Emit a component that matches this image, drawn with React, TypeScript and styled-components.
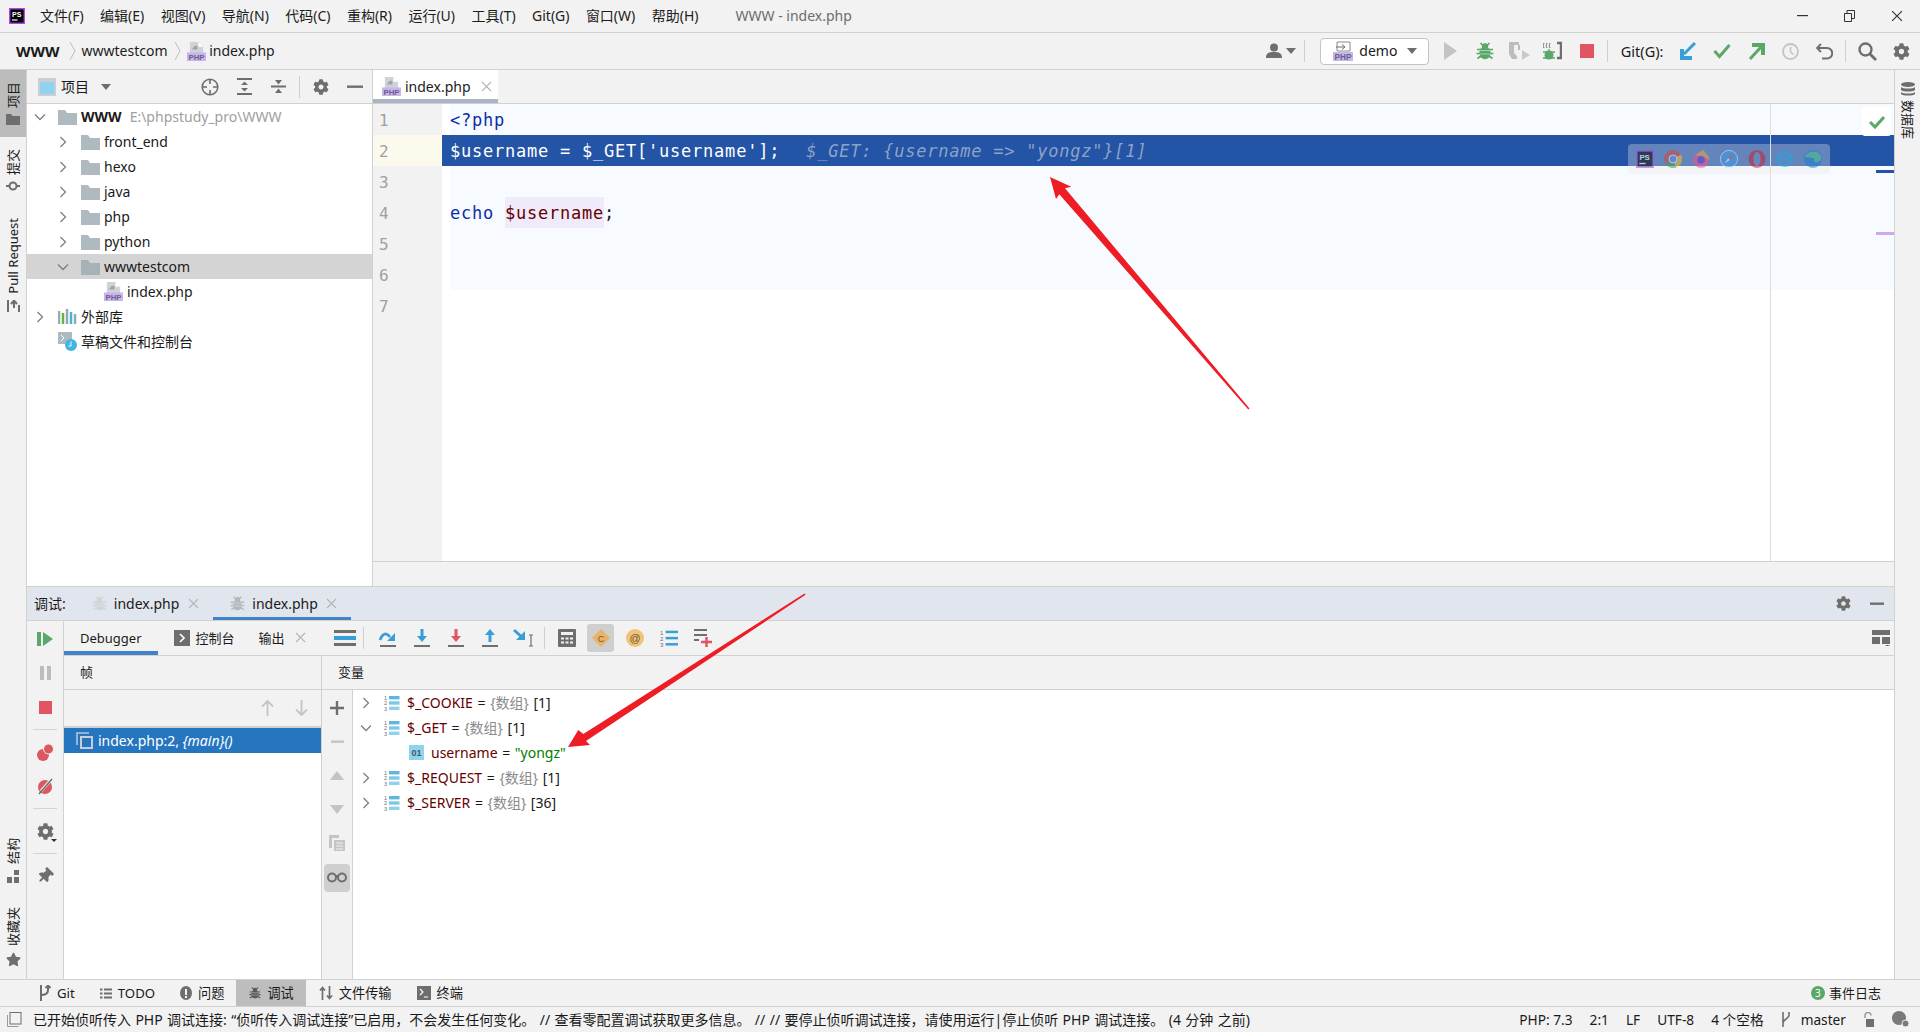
import React from 'react';
import styled, { createGlobalStyle } from 'styled-components';
import { FaCog, FaStar, FaThumbtack } from 'react-icons/fa';

const Global = createGlobalStyle`
  html, body { margin: 0; padding: 0; background: #f2f2f2; overflow: hidden; }
  #root { width: 1920px; height: 1032px; }
  * { box-sizing: border-box; }
`;

const LINE = '#d1d1d1';
const UI = `"Noto Sans", "Noto Sans CJK SC", sans-serif`;
const MONO = `"DejaVu Sans Mono", "Liberation Mono", "Noto Sans CJK SC", monospace`;

const Page = styled.div`
  position: relative; width: 1920px; height: 1032px; display: flex; flex-direction: column;
  overflow: hidden; background: #f2f2f2; color: #1a1a1a; font: 14px/20px ${UI}; white-space: nowrap;
`;
const IconSvg = styled.svg`display: block; flex: none;`;
const Slot = styled.div<{ $w?: number; $h?: number }>`
  flex: none; width: ${p => p.$w ?? 34}px; height: ${p => p.$h ? `${p.$h}px` : '100%'};
  display: flex; align-items: center; justify-content: center; color: #6e6e6e;
`;
const Sep = styled.div<{ $h?: number; $mx?: number }>`
  flex: none; width: 1px; height: ${p => p.$h ?? 22}px; background: #cfcfcf; margin: 0 ${p => p.$mx ?? 4}px;
`;
const Push = styled.div`margin-left: auto; display: flex; align-items: center; height: 100%;`;

/* title */
const TitleBar = styled.header`flex: none; height: 33px; display: flex; align-items: center; border-bottom: 1px solid ${LINE}; padding-left: 9px;`;
const Menu = styled.nav`display: flex; gap: 16.4px; margin-left: 15px;`;
const MenuItem = styled.span`color: #1c1c1c;`;
const WinTitle = styled.span`margin-left: 37px; color: #6d6d6d;`;

/* nav */
const NavBar = styled.div`flex: none; height: 37px; display: flex; align-items: center; border-bottom: 1px solid ${LINE}; padding: 0 2px 0 16px;`;
const CrumbRoot = styled.b`font-weight: 700; font-size: 15px; margin-right: 3px;`;
const Crumb = styled.span`color: #1c1c1c;`;
const CrumbArrow = styled.span`display: flex; margin: 0 6px;`;
const RunCombo = styled.div`
  flex: none; width: 109px; height: 27px; margin: 0 4.5px 0 7px; background: #fff; border: 1px solid #c4c4c4; border-radius: 4px;
  display: flex; align-items: center; padding-left: 12px; gap: 6px;
`;
const Caret = styled.span<{ $ml?: number }>`
  width: 0; height: 0; border-left: 5px solid transparent; border-right: 5px solid transparent;
  border-top: 6px solid #6e6e6e; margin-left: ${p => p.$ml ?? 0}px; flex: none;
`;
const GitLabel = styled.span`margin: 0 7.5px 0 10px; font-size: 14.5px;`;

/* main */
const Main = styled.div`flex: 1; min-height: 0; display: flex;`;
const LeftStrip = styled.aside`flex: none; width: 27px; border-right: 1px solid ${LINE}; display: flex; flex-direction: column; align-items: stretch;`;
const RightStrip = styled.aside`flex: none; width: 26px; border-left: 1px solid ${LINE}; display: flex; flex-direction: column; align-items: center; padding-top: 12px; gap: 4px;`;
const StripItem = styled.div<{ $active?: boolean; $mt?: string }>`
  display: flex; flex-direction: column; align-items: center; gap: 6px; padding: 12px 0;
  background: ${p => p.$active ? '#bcbcbc' : 'transparent'}; margin-top: ${p => p.$mt ?? '0'};
`;
const UpText = styled.span`writing-mode: vertical-rl; text-orientation: sideways; transform: rotate(180deg); font-size: 13px; line-height: 18px;`;
const DownText = styled.span`writing-mode: vertical-rl; text-orientation: sideways; font-size: 13px; line-height: 18px;`;

const Center = styled.div`flex: 1; min-width: 0; display: flex; flex-direction: column;`;
const Upper = styled.div`flex: none; height: 516px; display: flex;`;

/* project */
const Project = styled.section`flex: none; width: 346px; background: #fff; border-right: 1px solid ${LINE}; display: flex; flex-direction: column;`;
const PanelBar = styled.div`flex: none; height: 34px; background: #f2f2f2; border-bottom: 1px solid ${LINE}; display: flex; align-items: center; padding-left: 11px;`;
const PanelTitle = styled.span`margin: 0 12px 0 5px;`;
const Row = styled.div<{ $level: number; $sel?: boolean }>`
  height: 25px; display: flex; align-items: center; padding-left: ${p => 4 + p.$level * 23}px;
  background: ${p => p.$sel ? '#d4d4d4' : 'transparent'};
`;
const Twist = styled.span`width: 17px; flex: none; display: flex; justify-content: center; margin-right: 10px;`;
const RowLabel = styled.span<{ $bold?: boolean }>`margin-left: 4px; font-weight: ${p => p.$bold ? 700 : 400};`;
const Dim = styled.span`margin-left: 8px; color: #a0a0a0;`;

/* editor */
const Editor = styled.section`flex: 1; min-width: 0; display: flex; flex-direction: column;`;
const EditorTabs = styled.div`flex: none; height: 34px; border-bottom: 1px solid ${LINE}; display: flex;`;
const EditorTab = styled.div`
  width: 125px; background: #fff; border-bottom: 4px solid #a9b5c4; display: flex; align-items: center; padding: 4px 0 0 9px; gap: 4px;
`;
const CloseX = styled.span<{ $ml?: number }>`display: flex; margin-left: ${p => p.$ml ?? 6}px;`;
const EditorBody = styled.div`flex: 1; min-height: 0; display: flex; background: #fff;`;
const Gutter = styled.div`flex: none; width: 69px; background: #f2f2f2;`;
const GutterNum = styled.div<{ $active?: boolean }>`
  height: 31px; padding-left: 6px; font: 16px/33px ${MONO}; color: #a0a0a0;
  background: ${p => p.$active ? '#fcfaed' : 'transparent'};
`;
const Code = styled.div`flex: 1; min-width: 0; position: relative; overflow: hidden;`;
const CodeLine = styled.div<{ $active?: boolean; $plain?: boolean }>`
  height: 31px; padding-left: 8px; font: 17px/33px ${MONO}; letter-spacing: 0.77px; white-space: pre;
  color: ${p => p.$active ? '#fff' : '#1a1a1a'};
  background: ${p => p.$active ? '#2354a5' : p.$plain ? '#fff' : 'linear-gradient(to right, #fff 8px, #f7faff 8px)'};
`;
const Kw = styled.span`color: #0a2fa8;`;
const UsedVar = styled.span`display: inline-block; height: 31px; background: #efebfa; color: #660000;`;
const Hint = styled.span`margin-left: 26px; font-style: italic; color: #8da2c8;`;
const RightMargin = styled.div`position: absolute; left: 1328px; top: 0; bottom: 0; width: 1px; background: #dcdcdc;`;
const InspectBadge = styled.div`position: absolute; right: 3px; top: 3px; width: 29px; height: 29px; background: #fff; border-radius: 3px; display: flex; align-items: center; justify-content: center;`;
const StripeMark = styled.div<{ $top: number; $color: string }>`position: absolute; right: 0; top: ${p => p.$top}px; width: 18px; height: 3px; background: ${p => p.$color};`;
const BrowserBar = styled.div`
  position: absolute; left: 1186px; top: 40px; width: 202px; height: 30px; border-radius: 4px; background: rgba(233,233,233,.33);
  display: flex; align-items: center; padding-left: 8px; gap: 10px;
`;
const BrowserIcon = styled.span`opacity: .55; display: flex;`;
const HScroll = styled.div`flex: none; height: 25px; border-top: 1px solid ${LINE};`;

/* debug */
const Debug = styled.section`flex: 1; min-height: 0; border-top: 1px solid ${LINE}; display: flex; flex-direction: column; background: #f2f2f2;`;
const DebugHead = styled.div`flex: none; height: 34px; background: #e1e5ed; border-bottom: 1px solid ${LINE}; display: flex; align-items: center; padding-left: 7px;`;
const DebugTab = styled.div<{ $active?: boolean }>`
  height: 33px; display: flex; align-items: center; gap: 7px; padding: 3px 14px 0 17px;
  border-bottom: 3px solid ${p => p.$active ? '#4083c9' : 'transparent'};
  margin-left: ${p => p.$active ? 0 : 9}px;
`;
const DebugBody = styled.div`flex: 1; min-height: 0; display: flex;`;
const DebugSide = styled.div`flex: none; width: 37px; border-right: 1px solid ${LINE}; display: flex; flex-direction: column; align-items: center; padding-top: 1px;`;
const SideSep = styled.div`width: 24px; height: 1px; background: #d4d4d4; margin: 5px 0;`;
const GearDrop = styled.span`
  position: relative; display: flex;
  &::after { content: ''; position: absolute; right: -3px; bottom: -2px; border-left: 3px solid transparent; border-right: 3px solid transparent; border-top: 3px solid #333; }
`;
const Pin = styled.span`display: flex; transform: rotate(45deg);`;
const DebugMain = styled.div`flex: 1; min-width: 0; display: flex; flex-direction: column;`;
const DebugTabs = styled.div`flex: none; height: 35px; border-bottom: 1px solid ${LINE}; display: flex; align-items: center; font-size: 13px;`;
const SubTab = styled.div<{ $active?: boolean; $pad?: string }>`
  height: 34px; display: flex; align-items: center; gap: 6px; padding: ${p => p.$pad ?? '0 16px'};
  border-bottom: 4px solid ${p => p.$active ? '#4083c9' : 'transparent'};
  padding-top: 3px;
`;
const ToggledBox = styled.span`width: 27px; height: 28px; background: #cfcfcf; border-radius: 3px; display: flex; align-items: center; justify-content: center;`;
const Panes = styled.div`flex: 1; min-height: 0; display: flex;`;
const Frames = styled.div`flex: none; width: 258px; border-right: 1px solid ${LINE}; display: flex; flex-direction: column; background: #fff;`;
const PaneHead = styled.div`flex: none; height: 34px; background: #f2f2f2; border-bottom: 1px solid ${LINE}; display: flex; align-items: center; padding: 0 0 2px 16px; font-size: 13px;`;
const FrameTools = styled.div`flex: none; height: 38px; background: #f2f2f2; border-bottom: 2px solid ${LINE}; display: flex; align-items: center; justify-content: flex-end; padding-right: 3px;`;
const FrameRow = styled.div`height: 25px; background: #2675bf; color: #fff; display: flex; align-items: center; padding-left: 12px; gap: 5px;`;
const Vars = styled.div`flex: 1; min-width: 0; display: flex; flex-direction: column;`;
const VarBody = styled.div`flex: 1; min-height: 0; display: flex; background: #fff;`;
const VarTools = styled.div`flex: none; width: 31px; background: #f2f2f2; border-right: 1px solid ${LINE}; display: flex; flex-direction: column; align-items: center; padding-top: 1px; gap: 0;`;
const VarList = styled.div`flex: 1;`;
const VarRow = styled.div<{ $child?: boolean }>`
  height: 25px; display: flex; align-items: center; padding-left: ${p => p.$child ? 56 : 3}px; font-size: 14px; word-spacing: 1px;
`;
const VarTwist = styled.span`width: 20px; display: flex; justify-content: center; flex: none; margin-right: 8px;`;
const VarName = styled.span`margin-left: 7px; color: #660000;`;
const VarType = styled.span`color: #8a8a8a;`;
const VarStr = styled.span`color: #008000;`;
const GlassBox = styled.span`width: 26px; height: 28px; border-radius: 4px; background: #cfcfcf; display: flex; align-items: center; justify-content: center;`;

/* bottom */
const ToolBar = styled.footer`flex: none; height: 27px; border-top: 1px solid ${LINE}; display: flex; align-items: stretch; padding-left: 26px;`;
const ToolItem = styled.div<{ $active?: boolean }>`
  display: flex; align-items: center; gap: 6px; padding: 0 12px 0 13px; font-size: 13.2px;
  background: ${p => p.$active ? '#bdbdbd' : 'transparent'};
`;
const EventBadge = styled.span`width: 14px; height: 14px; border-radius: 50%; background: #59a869; color: #fff; font-size: 10px; line-height: 14px; text-align: center;`;
const EventLog = styled.div`margin-left: auto; display: flex; align-items: center; gap: 4px; padding-right: 39px; font-size: 13px;`;
const StatusBar = styled.footer`flex: none; height: 26px; border-top: 1px solid ${LINE}; display: flex; align-items: center; padding-left: 7px; font-size: 14px;`;
const StatusMsg = styled.span`margin-left: 11px; word-spacing: 0.75px;`;
const StatusRight = styled.div`margin-left: auto; display: flex; align-items: center; gap: 17px; padding-right: 10px; font-size: 13.7px;`;
const BranchCell = styled.span`display: flex; align-items: center; gap: 10px;`;

const ArrowOverlay = styled.svg`position: absolute; left: 0; top: 0; pointer-events: none;`;

/* ---------- icons ---------- */
const I = ({ w = 16, h = 16, vb = '0 0 16 16', children }: { w?: number; h?: number; vb?: string; children: React.ReactNode }) =>
  <IconSvg width={w} height={h} viewBox={vb}>{children}</IconSvg>;

const Chev = ({ down, c = '#7f7f7f', size = 12 }: { down?: boolean; c?: string; size?: number }) => (
  <I w={size} h={size} vb="0 0 12 12">
    <path d={down ? 'M1 3.5 L6 8.5 L11 3.5' : 'M3.5 1 L8.5 6 L3.5 11'} fill="none" stroke={c} strokeWidth="1.3" />
  </I>
);
const Folder = ({ c = '#aeb9c0', w = 19 }: { c?: string; w?: number }) => (
  <I w={w} h={16} vb="0 0 19 16"><path d="M0 1h7l2 3h10v12H0z" fill={c} /></I>
);
const PhpFile = ({ w = 20, h = 20 }: { w?: number; h?: number }) => (
  <I w={w} h={h} vb="0 0 20 20">
    <path d="M3 0h9l5 5v7H3z" fill="#cfd3d6" />
    <path d="M12 0v5h5z" fill="#fff" />
    <path d="M8 4h3v4H5z" fill="#9fa6ab" />
    <rect x="0" y="11" width="20" height="9" fill="#c8b5ef" />
    <text x="10" y="18.6" textAnchor="middle" fontSize="8.2" fontWeight="700" fontFamily="Liberation Sans, sans-serif" fill="#6a5f86">PHP</text>
  </I>
);
const Close = ({ c = '#b5b5b5', s = 11 }: { c?: string; s?: number }) => (
  <I w={s} h={s} vb="0 0 11 11"><path d="M1 1l9 9M10 1l-9 9" stroke={c} strokeWidth="1.1" /></I>
);
const Bug = ({ c = '#59a869', s = 18 }: { c?: string; s?: number }) => (
  <I w={s} h={s} vb="0 0 18 18">
    <ellipse cx="9" cy="11" rx="5.6" ry="6.2" fill={c} />
    <circle cx="9" cy="4.5" r="3.2" fill={c} />
    <path d="M4.5 1l2.500 2.500M13.500 1L11 3.500M1 7.500h4M17 7.500h-4M0.500 11.500h4M17.500 11.500h-4M1.500 16.500l3.500-2.500M16.500 16.500l-3.500-2.500" stroke={c} strokeWidth="1.7" />
    <path d="M3.500 8.500h11M3.500 12h11" stroke="#f2f2f2" strokeWidth=".9" opacity=".6" />
  </I>
);
const PsLogo = ({ s = 16 }: { s?: number }) => (
  <I w={s} h={s} vb="0 0 16 16">
    <rect x="0" y="0" width="16" height="16" fill="#b345f1" />
    <rect x="1.4" y="1.4" width="13.2" height="13.2" fill="#000" />
    <text x="3" y="8.6" fontSize="7" fontWeight="700" fontFamily="Liberation Sans, sans-serif" fill="#fff">PS</text>
    <rect x="3" y="11.4" width="5.5" height="1.2" fill="#fff" />
  </I>
);
const Gear = ({ s = 16, c = '#6e6e6e' }: { s?: number; c?: string }) => <FaCog size={s} color={c} />;
const MinusIco = ({ c = '#6e6e6e', w = 16 }: { c?: string; w?: number }) => (
  <I w={w} h={4} vb={`0 0 ${w} 4`}><rect y="0.5" width={w} height="2.4" fill={c} /></I>
);
const StepBase = ({ children }: { children: React.ReactNode }) => (
  <I w={20} h={20} vb="0 0 20 20">{children}<rect x="2" y="17" width="16" height="2" fill="#6e6e6e" /></I>
);
const BLUE = '#389fd6';
const ListNum = ({ w = 16 }: { w?: number }) => (
  <I w={w} h={16} vb="0 0 16 16">
    <text x="0" y="5" fontSize="5.5" fontFamily="Liberation Sans, sans-serif" fill="#6e6e6e">1</text>
    <text x="0" y="10.4" fontSize="5.5" fontFamily="Liberation Sans, sans-serif" fill="#6e6e6e">2</text>
    <text x="0" y="15.8" fontSize="5.5" fontFamily="Liberation Sans, sans-serif" fill="#6e6e6e">3</text>
    <rect x="5" y="1" width="10.5" height="3.4" fill="#5eb6dd" />
    <rect x="5" y="6.3" width="10.5" height="3.4" fill="#7cc8e6" />
    <rect x="5" y="11.6" width="10.5" height="3.4" fill="#8fd2ea" />
  </I>
);

const Arrows = () => (
  <ArrowOverlay width={1920} height={1032} viewBox="0 0 1920 1032">
    <polygon fill="#ee1c25" points="1050,177 1071.300,186.700 1065,188.300 1249.500,408.500 1248.300,409.500 1059.300,194.300 1056,199" />
    <polygon fill="#ee1c25" points="568,747 578.300,730 583.300,734 804.500,593.500 805.500,594.800 586,741 590,745" />
  </ArrowOverlay>
);

const menus = ['文件(F)', '编辑(E)', '视图(V)', '导航(N)', '代码(C)', '重构(R)', '运行(U)', '工具(T)', 'Git(G)', '窗口(W)', '帮助(H)'];
const folders = ['front_end', 'hexo', 'java', 'php', 'python'];

const CodeLines = () => (
  <Code>
    <CodeLine><Kw>&lt;?php</Kw></CodeLine>
    <CodeLine $active>$username = $_GET['username'];<Hint>$_GET: {'{'}username =&gt; "yongz"{'}'}[1]</Hint></CodeLine>
    <CodeLine />
    <CodeLine><Kw>echo</Kw> <UsedVar>$username</UsedVar>;</CodeLine>
    <CodeLine />
    <CodeLine />
    <CodeLine $plain />
    <RightMargin />
    <BrowserBar>
      <BrowserIcon><PsLogo s={18} /></BrowserIcon>
      <BrowserIcon><I w={18} h={18} vb="0 0 18 18"><circle cx="9" cy="9" r="9" fill="#d9463a" /><path d="M9 9L1.5 14A9 9 0 0 0 12 17.5z" fill="#3fa24f" /><path d="M9 9l3 8.5A9 9 0 0 0 17 4.5z" fill="#f0c030" /><circle cx="9" cy="9" r="4" fill="#5b8fe8" stroke="#fff" /></I></BrowserIcon>
      <BrowserIcon><I w={18} h={18} vb="0 0 18 18"><circle cx="9" cy="10" r="8" fill="#f2508c" /><path d="M3 6C6 2 9 1 12 0c1 4 6 5 5 11-3-5-8-6-14-5z" fill="#f6a43a" /><circle cx="9" cy="10" r="3.8" fill="#6a35c9" /></I></BrowserIcon>
      <BrowserIcon><I w={18} h={18} vb="0 0 18 18"><circle cx="9" cy="9" r="8.6" fill="#3c9ae8" stroke="#dfe9f5" /><path d="M13.5 4.5L8 8l2 2z" fill="#e5484d" /><path d="M4.5 13.5L8 8l2 2z" fill="#eee" /></I></BrowserIcon>
      <BrowserIcon><I w={18} h={18} vb="0 0 18 18"><ellipse cx="9" cy="9" rx="8.5" ry="9" fill="#d01c30" /><ellipse cx="9" cy="9" rx="3.6" ry="7" fill="#6a88bc" /></I></BrowserIcon>
      <BrowserIcon><I w={18} h={18} vb="0 0 18 18"><circle cx="9" cy="9" r="6.5" fill="none" stroke="#1ea7e8" strokeWidth="3.2" /><rect x="3" y="8" width="13" height="2.4" fill="#1ea7e8" /><path d="M11 14l7-2-2 3z" fill="#6a88bc" /></I></BrowserIcon>
      <BrowserIcon><I w={18} h={18} vb="0 0 18 18"><circle cx="9" cy="9" r="9" fill="#1a7fd4" /><path d="M1 7c2-6 12-8 16-1 1 3-1 6-4 6-3 1-4-2-2-3-3-2-8-1-10-2z" fill="#46c78a" /></I></BrowserIcon>
    </BrowserBar>
    <InspectBadge><I w={16} h={14} vb="0 0 16 14"><path d="M1 7l5 5 9-10" fill="none" stroke="#59a869" strokeWidth="3" /></I></InspectBadge>
    <StripeMark $top={66} $color="#2354a5" />
    <StripeMark $top={128} $color="#cfa6f5" />
  </Code>
);

export default function App() {
  return (
    <Page>
      <Global />
      <TitleBar>
        <PsLogo />
        <Menu>{menus.map(m => <MenuItem key={m}>{m}</MenuItem>)}</Menu>
        <WinTitle>WWW - index.php</WinTitle>
        <Push>
          <Slot $w={47}><I w={11} h={2} vb="0 0 11 2"><rect width="11" height="1.2" fill="#333" /></I></Slot>
          <Slot $w={47}><I w={11} h={12} vb="0 0 11 12"><path d="M0.5 3.5h7v8h-7zM3 3.5V0.5h7.5v8H7.5" fill="none" stroke="#333" /></I></Slot>
          <Slot $w={47}><Close c="#333" s={12} /></Slot>
        </Push>
      </TitleBar>

      <NavBar>
        <CrumbRoot>WWW</CrumbRoot>
        <CrumbArrow><I w={7} h={20} vb="0 0 7 20"><path d="M1 1l5 9-5 9" fill="none" stroke="#bdbdbd" /></I></CrumbArrow>
        <Crumb>wwwtestcom</Crumb>
        <CrumbArrow><I w={7} h={20} vb="0 0 7 20"><path d="M1 1l5 9-5 9" fill="none" stroke="#bdbdbd" /></I></CrumbArrow>
        <PhpFile w={19} h={19} />
        <Crumb>&nbsp;index.php</Crumb>
        <Push>
          <Slot $w={24}><I w={16} h={16}><circle cx="8" cy="4.5" r="4" fill="#6e6e6e" /><path d="M0 15c0-5 3-6 8-6s8 1 8 6z" fill="#6e6e6e" /></I></Slot>
          <Caret /><Sep $mx={8} />
          <RunCombo>
            <I w={20} h={20} vb="0 0 20 20">
              <path d="M4 1h13v9H4z" fill="none" stroke="#8a8a8a" /><path d="M3 6h9M9 3.5l3 2.5-3 2.5" fill="none" stroke="#6e6e6e" />
              <rect y="11" width="20" height="9" fill="#c8b5ef" /><text x="10" y="18.6" textAnchor="middle" fontSize="8.2" fontWeight="700" fontFamily="Liberation Sans, sans-serif" fill="#6a5f86">PHP</text>
            </I>
            <span>demo</span>
            <Caret $ml={4} />
          </RunCombo>
          <Slot><I w={13} h={18} vb="0 0 13 18"><path d="M0 0l13 9L0 18z" fill="#c4c4c4" /></I></Slot>
          <Slot><Bug /></Slot>
          <Slot><I w={22} h={20} vb="0 0 22 20"><path d="M1 1h10v3H6v8l3 3v3H4l-3-5z" fill="#bdbdbd" /><path d="M11 4v5" stroke="#bdbdbd" strokeWidth="2" /><path d="M14 9l8 5-8 5z" fill="#c9c9c9" /></I></Slot>
          <Slot><I w={19} h={20} vb="0 0 19 20"><path d="M14 2h4v15h-4" fill="none" stroke="#6e6e6e" strokeWidth="2.4" /><path d="M1 2c-1 2-1 3 0 5M4 2c-1 2-1 3 0 5M7 2c-1 2-1 3 0 5" fill="none" stroke="#6e6e6e" /><circle cx="6" cy="14" r="4.5" fill="#59a869" /><path d="M0 11h12M0 17h12M6 8v3" stroke="#59a869" strokeWidth="1.3" /></I></Slot>
          <Slot><I w={14} h={14} vb="0 0 14 14"><rect width="14" height="14" fill="#e05561" /></I></Slot>
          <Sep $h={22} $mx={3} />
          <GitLabel>Git(G):</GitLabel>
          <Slot><I w={17} h={18} vb="0 0 17 18"><path d="M15 1L4 12" stroke={BLUE} strokeWidth="3" /><path d="M0 7v11h12v-4H4V7z" fill={BLUE} /></I></Slot>
          <Slot><I w={18} h={16} vb="0 0 18 16"><path d="M1.5 8l5 5.5L16.5 2" fill="none" stroke="#59a869" strokeWidth="3" /></I></Slot>
          <Slot><I w={17} h={18} vb="0 0 17 18"><path d="M2 17L13 5" stroke="#59a869" strokeWidth="3" /><path d="M4 1h13v12h-4V5H4z" fill="#59a869" /></I></Slot>
          <Slot><I w={17} h={17} vb="0 0 17 17"><circle cx="8.5" cy="8.5" r="7.5" fill="none" stroke="#c4c4c4" strokeWidth="1.8" /><path d="M8.5 4v5l3 2.5" fill="none" stroke="#c4c4c4" strokeWidth="1.6" /></I></Slot>
          <Slot><I w={17} h={17} vb="0 0 17 17"><path d="M5 1L1 5l4 4" fill="none" stroke="#6e6e6e" strokeWidth="1.8" /><path d="M1.5 5H11a5 5 0 0 1 0 10.500H6" fill="none" stroke="#6e6e6e" strokeWidth="2" /></I></Slot>
          <Sep $h={22} $mx={4} />
          <Slot><I w={19} h={19} vb="0 0 19 19"><circle cx="7.5" cy="7.5" r="6" fill="none" stroke="#6e6e6e" strokeWidth="2.4" /><path d="M12 12l6 6" stroke="#6e6e6e" strokeWidth="2.8" /></I></Slot>
          <Slot><Gear s={17} /></Slot>
        </Push>
      </NavBar>

      <Main>
        <LeftStrip>
          <StripItem $active>
            <UpText>项目</UpText>
            <I w={14} h={11} vb="0 0 14 11"><path d="M0 0h5l1.500 2H14v9H0z" fill="#6e6e6e" /></I>
          </StripItem>
          <StripItem>
            <UpText>提交</UpText>
            <I w={14} h={10} vb="0 0 14 10"><circle cx="7" cy="5" r="3.500" fill="none" stroke="#6e6e6e" strokeWidth="2" /><path d="M0 5h3M11 5h3" stroke="#6e6e6e" strokeWidth="2" /></I>
          </StripItem>
          <StripItem $mt="3px">
            <UpText>Pull Request</UpText>
            <I w={13} h={12} vb="0 0 13 12"><path d="M1 0v12M12 5v7M4 4l3-3.500L10 4M7 1v7" fill="none" stroke="#6e6e6e" strokeWidth="2" /></I>
          </StripItem>
          <StripItem $mt="auto">
            <UpText>结构</UpText>
            <I w={13} h={13} vb="0 0 13 13"><rect x="7" y="0" width="5" height="5" fill="#6e6e6e" /><rect y="7" width="5" height="6" fill="#6e6e6e" /><rect x="7" y="7" width="5" height="6" fill="#6e6e6e" /></I>
          </StripItem>
          <StripItem>
            <UpText>收藏夹</UpText>
            <FaStar size={15} color="#6e6e6e" />
          </StripItem>
        </LeftStrip>

        <Center>
          <Upper>
            <Project>
              <PanelBar>
                <I w={18} h={18} vb="0 0 18 18"><rect width="18" height="18" fill="#c9cfd4" /><rect x="2" y="4" width="14" height="12" fill="#8fd3ef" /></I>
                <PanelTitle>项目</PanelTitle>
                <Caret />
                <Push>
                  <Slot><I w={18} h={18} vb="0 0 18 18"><circle cx="9" cy="9" r="7.800" fill="none" stroke="#6e6e6e" strokeWidth="1.600" /><path d="M9 1v5M9 12v5M1 9h5M12 9h5" stroke="#6e6e6e" strokeWidth="1.600" /></I></Slot>
                  <Slot><I w={17} h={17} vb="0 0 17 17"><path d="M1 1h15M1 16h15" stroke="#6e6e6e" strokeWidth="2" /><path d="M8.500 3.500l3.500 3.500H5zM8.500 13.500l3.500-3.500H5z" fill="#6e6e6e" /></I></Slot>
                  <Slot><I w={17} h={17} vb="0 0 17 17"><path d="M1 8.500h15" stroke="#6e6e6e" strokeWidth="2" /><path d="M8.500 6.500L5 2h7zM8.500 10.500L12 15H5z" fill="#6e6e6e" /></I></Slot>
                  <Sep $h={22} />
                  <Slot><Gear s={16} /></Slot>
                  <Slot><MinusIco /></Slot>
                </Push>
              </PanelBar>
              <Row $level={0}>
                <Twist><Chev down /></Twist><Folder />
                <RowLabel $bold>WWW</RowLabel><Dim>E:\phpstudy_pro\WWW</Dim>
              </Row>
              {folders.map(f => (
                <Row key={f} $level={1}><Twist><Chev /></Twist><Folder /><RowLabel>{f}</RowLabel></Row>
              ))}
              <Row $level={1} $sel><Twist><Chev down /></Twist><Folder c="#a6b1b8" /><RowLabel>wwwtestcom</RowLabel></Row>
              <Row $level={2}><Twist /><PhpFile w={19} h={19} /><RowLabel>index.php</RowLabel></Row>
              <Row $level={0}>
                <Twist><Chev /></Twist>
                <I w={19} h={17} vb="0 0 19 17"><path d="M1 3v13" stroke="#9aa7b0" strokeWidth="2.500" /><path d="M5 5v11" stroke="#62b543" strokeWidth="2.500" /><path d="M9 1v15" stroke="#9aa7b0" strokeWidth="2.500" /><path d="M13 4v12" stroke="#40b6e0" strokeWidth="2.500" /><path d="M17 6v10" stroke="#9aa7b0" strokeWidth="2.500" /></I>
                <RowLabel>外部库</RowLabel>
              </Row>
              <Row $level={0}>
                <Twist />
                <I w={19} h={19} vb="0 0 19 19"><rect width="14" height="12" fill="#aeb9c0" /><path d="M3 3l3 3-3 3" fill="none" stroke="#fff" /><circle cx="13" cy="13" r="6" fill="#40b6e0" /><path d="M13 9.500V14h-2.500" fill="none" stroke="#fff" /></I>
                <RowLabel>草稿文件和控制台</RowLabel>
              </Row>
            </Project>
            <Editor>
              <EditorTabs>
                <EditorTab><PhpFile w={19} h={19} /><span>index.php</span><CloseX><Close /></CloseX></EditorTab>
              </EditorTabs>
              <EditorBody>
                <Gutter>
                  {[1, 2, 3, 4, 5, 6, 7].map(n => <GutterNum key={n} $active={n === 2}>{n}</GutterNum>)}
                </Gutter>
                <CodeLines />
              </EditorBody>
              <HScroll />
            </Editor>
          </Upper>

          <Debug>
            <DebugHead>
              <span>调试:</span>
              <DebugTab><Bug c="#d2d4d8" s={15} /><span>index.php</span><CloseX $ml={2}><Close /></CloseX></DebugTab>
              <DebugTab $active><Bug c="#b4b8bc" s={15} /><span>index.php</span><CloseX $ml={1}><Close /></CloseX></DebugTab>
              <Push>
                <Slot><Gear s={15} /></Slot>
                <Slot><MinusIco w={14} /></Slot>
              </Push>
            </DebugHead>
            <DebugBody>
              <DebugSide>
                <Slot $h={34}><I w={16} h={14} vb="0 0 16 14"><rect width="4" height="14" fill="#59a869" /><path d="M6 0l10 7-10 7z" fill="#59a869" /></I></Slot>
                <Slot $h={34}><I w={11} h={14} vb="0 0 11 14"><rect width="4" height="14" fill="#bdbdbd" /><rect x="7" width="4" height="14" fill="#bdbdbd" /></I></Slot>
                <Slot $h={34}><I w={13} h={13} vb="0 0 13 13"><rect width="13" height="13" fill="#e05561" /></I></Slot>
                <SideSep />
                <Slot $h={34}><I w={17} h={17} vb="0 0 17 17"><circle cx="6" cy="11" r="6" fill="#db5860" /><circle cx="11.500" cy="5" r="5" fill="#db5860" stroke="#f2f2f2" /></I></Slot>
                <Slot $h={34}><I w={17} h={17} vb="0 0 17 17"><circle cx="8" cy="9" r="7" fill="#db5860" /><path d="M4 13L13 3" stroke="#f2f2f2" strokeWidth="3" /><path d="M2 16L15 1" stroke="#6e6e6e" strokeWidth="1.500" /></I></Slot>
                <SideSep />
                <Slot $h={34}><GearDrop><Gear s={17} /></GearDrop></Slot>
                <SideSep />
                <Slot $h={34}><Pin><FaThumbtack size={16} color="#6e6e6e" /></Pin></Slot>
              </DebugSide>
              <DebugMain>
                <DebugTabs>
                  <SubTab $active>Debugger</SubTab>
                  <SubTab $pad="0 16px"><I w={16} h={16}><rect width="16" height="16" fill="#6e6e6e" /><path d="M6 4l4 4-4 4" fill="none" stroke="#fff" strokeWidth="1.700" /></I><span>控制台</span></SubTab>
                  <SubTab $pad="0 0 0 8px"><span>输出</span><CloseX $ml={4}><Close /></CloseX></SubTab>
                  <Slot $w={22} />
                  <Slot><I w={22} h={16} vb="0 0 22 16"><rect width="22" height="3" fill="#6e6e6e" /><rect y="6" width="22" height="4" fill={BLUE} /><rect y="13" width="22" height="3" fill="#6e6e6e" /></I></Slot>
                  <Sep $h={22} $mx={1} />
                  <Slot $w={6} />
                  <Slot><StepBase><path d="M2 12C4 6 8 3.500 12 9" fill="none" stroke={BLUE} strokeWidth="2.600" /><path d="M17 13V5l-8 8z" fill={BLUE} /></StepBase></Slot>
                  <Slot><StepBase><path d="M8.500 1h3v7h3.500L10 14 5 8h3.500z" fill={BLUE} /></StepBase></Slot>
                  <Slot><StepBase><path d="M8.500 1h3v7h3.500L10 14 5 8h3.500z" fill="#e05561" /></StepBase></Slot>
                  <Slot><StepBase><path d="M8.500 14h3V7h3.500L10 1 5 7h3.500z" fill={BLUE} /></StepBase></Slot>
                  <Slot><I w={22} h={20} vb="0 0 22 20"><path d="M1 2l10 9" stroke={BLUE} strokeWidth="3" /><path d="M12 3v9H3z" fill={BLUE} /><path d="M16 7h4M18 7v11M16 18h4" fill="none" stroke="#6e6e6e" strokeWidth="1.200" /></I></Slot>
                  <Sep $h={22} $mx={3} />
                  <Slot $w={2} />
                  <Slot><I w={18} h={18} vb="0 0 18 18"><rect width="18" height="18" rx="1" fill="#6e6e6e" /><rect x="3" y="3" width="12" height="3" fill="#f2f2f2" /><path d="M3 8.500h3v2H3zM7.500 8.500h3v2h-3zM12 8.500h3v2h-3zM3 12.500h3v2H3zM7.500 12.500h3v2h-3zM12 12.500h3v2h-3z" fill="#f2f2f2" /></I></Slot>
                  <Slot><ToggledBox><I w={18} h={18} vb="0 0 18 18"><path d="M9 0l9 9-9 9-9-9z" fill="#e8b468" /><text x="9" y="12.500" textAnchor="middle" fontSize="9" fontFamily="Liberation Sans, sans-serif" fill="#6e5a30">C</text></I></ToggledBox></Slot>
                  <Slot><I w={18} h={18} vb="0 0 18 18"><circle cx="9" cy="9" r="9" fill="#f0c27a" /><text x="9" y="13" textAnchor="middle" fontSize="11" fontFamily="Liberation Sans, sans-serif" fill="#6e5a30">@</text></I></Slot>
                  <Slot><I w={18} h={18} vb="0 0 16 16"><text x="0" y="5" fontSize="5.500" fontFamily="Liberation Sans, sans-serif" fill="#6e6e6e">1</text><text x="0" y="10.400" fontSize="5.500" fontFamily="Liberation Sans, sans-serif" fill="#6e6e6e">2</text><text x="0" y="15.800" fontSize="5.500" fontFamily="Liberation Sans, sans-serif" fill="#6e6e6e">3</text><rect x="5" y="1.500" width="11" height="2.200" fill={BLUE} /><rect x="5" y="7" width="11" height="2.200" fill={BLUE} /><rect x="5" y="12.500" width="11" height="2.200" fill={BLUE} /></I></Slot>
                  <Slot><I w={20} h={18} vb="0 0 20 18"><path d="M1 1h13M1 6h13M1 11h5" stroke="#6e6e6e" strokeWidth="2" /><path d="M8 13h11M13.500 8v10" stroke="#e05561" strokeWidth="2.400" /></I></Slot>
                  <Push>
                    <Slot $w={20}><I w={18} h={16} vb="0 0 18 16"><rect width="18" height="5" fill="#6e6e6e" /><rect y="7" width="8" height="7" fill="#6e6e6e" /><rect x="10" y="7" width="8" height="7" fill="#6e6e6e" /><path d="M13 15h5l-2.500 1z" fill="#333" /></I></Slot>
                    <Slot $w={3} />
                  </Push>
                </DebugTabs>
                <Panes>
                  <Frames>
                    <PaneHead>帧</PaneHead>
                    <FrameTools>
                      <Slot $w={34}><I w={13} h={16} vb="0 0 13 16"><path d="M6.500 1v15M1 6.500L6.500 1 12 6.500" fill="none" stroke="#c4c4c4" strokeWidth="1.800" /></I></Slot>
                      <Slot $w={34}><I w={13} h={16} vb="0 0 13 16"><path d="M6.500 0v15M1 9.500L6.500 15 12 9.500" fill="none" stroke="#c4c4c4" strokeWidth="1.800" /></I></Slot>
                    </FrameTools>
                    <FrameRow>
                      <I w={17} h={17} vb="0 0 17 17"><path d="M1 13V1h12" fill="none" stroke="#b8c4d2" strokeWidth="1.600" /><rect x="5" y="5" width="11" height="11" fill="none" stroke="#c5ced8" strokeWidth="2" /></I>
                      <span>index.php:2, <i>{'{main}()'}</i></span>
                    </FrameRow>
                  </Frames>
                  <Vars>
                    <PaneHead>变量</PaneHead>
                    <VarBody>
                      <VarTools>
                        <Slot $w={30} $h={34}><I w={14} h={14} vb="0 0 14 14"><path d="M7 0v14M0 7h14" stroke="#6e6e6e" strokeWidth="2.400" /></I></Slot>
                        <Slot $w={30} $h={34}><MinusIco c="#c4c4c4" w={13} /></Slot>
                        <Slot $w={30} $h={33}><I w={14} h={9} vb="0 0 14 9"><path d="M7 0l7 9H0z" fill="#c4c4c4" /></I></Slot>
                        <Slot $w={30} $h={34}><I w={14} h={9} vb="0 0 14 9"><path d="M7 9L0 0h14z" fill="#c4c4c4" /></I></Slot>
                        <Slot $w={30} $h={34}><I w={16} h={16}><path d="M0 0h10v3H3v10H0z" fill="#c4c4c4" /><rect x="5" y="5" width="11" height="11" fill="#c4c4c4" /><path d="M7 8h7M7 11h7M7 14h7" stroke="#f2f2f2" /></I></Slot>
                        <Slot $w={30} $h={35}><GlassBox><I w={20} h={11} vb="0 0 20 11"><circle cx="5" cy="5.500" r="4" fill="none" stroke="#6e6e6e" strokeWidth="2" /><circle cx="15" cy="5.500" r="4" fill="none" stroke="#6e6e6e" strokeWidth="2" /><path d="M8 4h4" stroke="#6e6e6e" strokeWidth="2" /></I></GlassBox></Slot>
                      </VarTools>
                      <VarList>
                        <VarRow><VarTwist><Chev /></VarTwist><ListNum /><VarName>$_COOKIE</VarName>&nbsp;=&nbsp;<VarType>{'{数组}'}</VarType>&nbsp;[1]</VarRow>
                        <VarRow><VarTwist><Chev down /></VarTwist><ListNum /><VarName>$_GET</VarName>&nbsp;=&nbsp;<VarType>{'{数组}'}</VarType>&nbsp;[1]</VarRow>
                        <VarRow $child>
                          <I w={15} h={15} vb="0 0 15 15"><rect width="15" height="15" fill="#8fd3ef" /><text x="7.500" y="11" textAnchor="middle" fontSize="9" fontWeight="700" fontFamily="Liberation Sans, sans-serif" fill="#3f5a68">01</text></I>
                          <VarName>username</VarName>&nbsp;=&nbsp;<VarStr>"yongz"</VarStr>
                        </VarRow>
                        <VarRow><VarTwist><Chev /></VarTwist><ListNum /><VarName>$_REQUEST</VarName>&nbsp;=&nbsp;<VarType>{'{数组}'}</VarType>&nbsp;[1]</VarRow>
                        <VarRow><VarTwist><Chev /></VarTwist><ListNum /><VarName>$_SERVER</VarName>&nbsp;=&nbsp;<VarType>{'{数组}'}</VarType>&nbsp;[36]</VarRow>
                      </VarList>
                    </VarBody>
                  </Vars>
                </Panes>
              </DebugMain>
            </DebugBody>
          </Debug>
        </Center>

        <RightStrip>
          <I w={14} h={14} vb="0 0 14 14"><ellipse cx="7" cy="2.500" rx="7" ry="2.500" fill="#6e6e6e" /><path d="M0 5c2 2 12 2 14 0v3c-2 2-12 2-14 0zM0 10c2 2 12 2 14 0v2c-2 2-12 2-14 0z" fill="#6e6e6e" /></I>
          <DownText>数据库</DownText>
        </RightStrip>
      </Main>

      <ToolBar>
        <ToolItem><I w={12} h={16} vb="0 0 12 16"><path d="M2 0v16M2 10c4 0 7-1 7-5M9 1v5M6.500 3L9 .5 11.500 3" fill="none" stroke="#6e6e6e" strokeWidth="2" /></I><span>Git</span></ToolItem>
        <ToolItem><I w={12} h={11} vb="0 0 12 11"><path d="M0 1.500h2.500M4 1.500h8M0 5.500h2.500M4 5.500h8M0 9.500h2.500M4 9.500h8" stroke="#6e6e6e" strokeWidth="2" /></I><span>TODO</span></ToolItem>
        <ToolItem><I w={12} h={14} vb="0 0 12 14"><ellipse cx="6" cy="7" rx="6" ry="7" fill="#6e6e6e" /><rect x="5" y="3" width="2" height="6" fill="#f2f2f2" /><rect x="5" y="10" width="2" height="2" fill="#f2f2f2" /></I><span>问题</span></ToolItem>
        <ToolItem $active><Bug c="#5a5a5a" s={12} /><span>调试</span></ToolItem>
        <ToolItem><I w={14} h={14} vb="0 0 14 14"><path d="M3.500 14V2M1 4.500l2.500-3 2.500 3M10.500 0v12M8 9.500l2.500 3 2.500-3" fill="none" stroke="#6e6e6e" strokeWidth="1.700" /></I><span>文件传输</span></ToolItem>
        <ToolItem><I w={14} h={14} vb="0 0 14 14"><rect width="14" height="14" fill="#6e6e6e" /><path d="M3 3l3 3-3 3M7 11h4" fill="none" stroke="#fff" strokeWidth="1.200" /></I><span>终端</span></ToolItem>
        <EventLog><EventBadge>3</EventBadge><span>事件日志</span></EventLog>
      </ToolBar>

      <StatusBar>
        <I w={15} h={15} vb="0 0 15 15"><path d="M0.500 3v11.500h11" fill="none" stroke="#9a9a9a" /><rect x="3" y="0.500" width="11" height="11.500" fill="none" stroke="#6e6e6e" /></I>
        <StatusMsg>已开始侦听传入 PHP 调试连接: “侦听传入调试连接”已启用，不会发生任何变化。 // 查看零配置调试获取更多信息。 // // 要停止侦听调试连接，请使用运行|停止侦听 PHP 调试连接。 (4 分钟 之前)</StatusMsg>
        <StatusRight>
          <span>PHP: 7.3</span>
          <span>2:1</span>
          <span>LF</span>
          <span>UTF-8</span>
          <span>4 个空格</span>
          <BranchCell>
            <I w={10} h={17} vb="0 0 10 17"><path d="M2 1v15M8 1v3c0 4-6 4-6 8" fill="none" stroke="#6e6e6e" strokeWidth="1.600" /></I>
            <span>master</span>
          </BranchCell>
          <I w={12} h={15} vb="0 0 12 15"><path d="M2 6V3.500a3 3 0 0 1 6 0" fill="none" stroke="#9a9a9a" strokeWidth="1.500" /><rect x="3" y="7" width="8" height="8" fill="#6e6e6e" /></I>
          <I w={18} h={17} vb="0 0 18 17"><path d="M0 7c0-4 3-7 7-7s7 3 7 7-3 7-7 7-7-3-7-7z" fill="#7a7a7a" /><circle cx="13.500" cy="12.500" r="3.500" fill="#7a7a7a" stroke="#f2f2f2" /></I>
        </StatusRight>
      </StatusBar>

      <Arrows />
    </Page>
  );
}
